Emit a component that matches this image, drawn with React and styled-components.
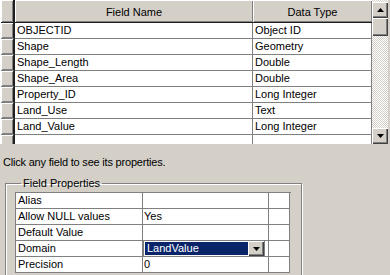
import React from 'react'
import styled, { createGlobalStyle } from 'styled-components'

const fields = [
  ['OBJECTID', 'Object ID'],
  ['Shape', 'Geometry'],
  ['Shape_Length', 'Double'],
  ['Shape_Area', 'Double'],
  ['Property_ID', 'Long Integer'],
  ['Land_Use', 'Text'],
  ['Land_Value', 'Long Integer'],
  ['', ''],
]

const props = [
  ['Alias', ''],
  ['Allow NULL values', 'Yes'],
  ['Default Value', ''],
  ['Domain', 'LandValue', true],
  ['Precision', '0'],
]

const Global = createGlobalStyle`
  body {
    margin: 0;
    background: #d4d0c8;
    font-family: "Liberation Sans", Arial, sans-serif;
    font-size: 11px;
    color: #000;
  }
`

const Page = styled.div`
  width: 390px;
  height: 275px;
  overflow: hidden;
  display: flex;
  flex-direction: column;
`

const TableBox = styled.div`
  display: flex;
  width: 388px;
  height: 144px;
  flex-shrink: 0;
  overflow: hidden;
`

const Grid = styled.div`
  display: grid;
  grid-template-columns: 14px 238px 119px;
  grid-template-rows: 23px;
  grid-auto-rows: 16px;
  align-content: start;
  border-left: 1px solid #fff;
`

const Selector = styled.div`
  background: #d4d0c8;
  box-shadow: inset 1px 1px #fff, inset -1px -1px #808080;
  border-right: 2px solid #202020;
  border-bottom: ${p => (p.$head ? '1px solid #202020' : '1px solid #808080')};
`

const HeadCell = styled.div`
  background: #d4d0c8;
  box-shadow: inset 1px 1px #fff, inset -1px -1px #808080;
  border-bottom: 1px solid #202020;
  display: flex;
  align-items: center;
  justify-content: center;
  padding-top: 2px;
`

const Cell = styled.div`
  background: #fff;
  border-right: 1px solid #808080;
  border-bottom: 1px solid #808080;
  padding-left: 2px;
  line-height: 15px;
  white-space: nowrap;
  overflow: hidden;
`

const Scroll = styled.div`
  width: 16px;
  padding-top: 2px;
  display: flex;
  flex-direction: column;
  background: repeating-conic-gradient(#fff 0 25%, #d4d0c8 0 50%) 0 0 / 2px 2px;
`

const ScrollBtn = styled.div`
  height: ${p => p.$h || 16}px;
  background: #d4d0c8;
  box-shadow: inset 1px 1px #fff, inset -1px -1px #404040, inset -2px -2px #808080;
  display: flex;
  align-items: center;
  justify-content: center;
  flex-shrink: 0;
`

const Track = styled.div`
  flex: 1;
`

const Hint = styled.div`
  padding: 12px 0 0 3px;
  height: 21px;
  line-height: 13px;
  letter-spacing: -0.2px;
  flex-shrink: 0;
`

const Group = styled.fieldset`
  margin: 0 0 0 5px;
  width: 297px;
  height: 110px;
  flex-shrink: 0;
  padding: 2px 0 0 9px;
  box-sizing: border-box;
  border: 1px solid #808080;
  box-shadow: inset 1px 1px #fff, 1px 1px #fff;

  legend {
    padding: 0 2px;
    margin-left: 6px;
    line-height: 13px;
  }
`

const PropGrid = styled.div`
  display: grid;
  grid-template-columns: 127px 126px 21px;
  grid-auto-rows: 16px;
  border-top: 1px solid #808080;
  border-left: 1px solid #808080;
  width: 275px;
`

const PropCell = styled(Cell)`
  padding-left: ${p => (p.$value ? 1 : 2)}px;
  overflow: visible;
`

const Combo = styled.div`
  display: flex;
  width: 122px;
  height: 17px;
  margin: -1px 0 0 -1px;
  box-sizing: border-box;
  border: 1px solid #808080;
  background: #fff;
  padding: 1px 0 1px 1px;
`

const ComboText = styled.div`
  flex: 1;
  background: #0a246a;
  color: #fff;
  padding-left: 2px;
  line-height: 13px;
`

const ComboBtn = styled(ScrollBtn)`
  width: 16px;
  height: 15px;
  margin-top: -1px;
`

const Arrow = ({ up }) => (
  <svg width="7" height="4" viewBox="0 0 7 4">
    <path d={up ? 'M3.5 0 L7 4 L0 4 Z' : 'M0 0 L7 0 L3.5 4 Z'} fill="#000" />
  </svg>
)

export default function App() {
  return (
    <Page>
      <Global />
      <TableBox>
        <Grid>
          <Selector $head />
          <HeadCell>Field Name</HeadCell>
          <HeadCell>Data Type</HeadCell>
          {fields.map(([name, type], i) => (
            <React.Fragment key={i}>
              <Selector />
              <Cell>{name}</Cell>
              <Cell>{type}</Cell>
            </React.Fragment>
          ))}
        </Grid>
        <Scroll>
          <ScrollBtn>
            <Arrow up />
          </ScrollBtn>
          <ScrollBtn $h={18} />
          <Track />
          <ScrollBtn>
            <Arrow />
          </ScrollBtn>
        </Scroll>
      </TableBox>
      <Hint>Click any field to see its properties.</Hint>
      <Group>
        <legend>Field Properties</legend>
        <PropGrid>
          {props.map(([label, value, combo], i) => (
            <React.Fragment key={i}>
              <PropCell>{label}</PropCell>
              <PropCell $value>
                {combo ? (
                  <Combo>
                    <ComboText>{value}</ComboText>
                    <ComboBtn>
                      <Arrow />
                    </ComboBtn>
                  </Combo>
                ) : (
                  value
                )}
              </PropCell>
              <PropCell />
            </React.Fragment>
          ))}
        </PropGrid>
      </Group>
    </Page>
  )
}
